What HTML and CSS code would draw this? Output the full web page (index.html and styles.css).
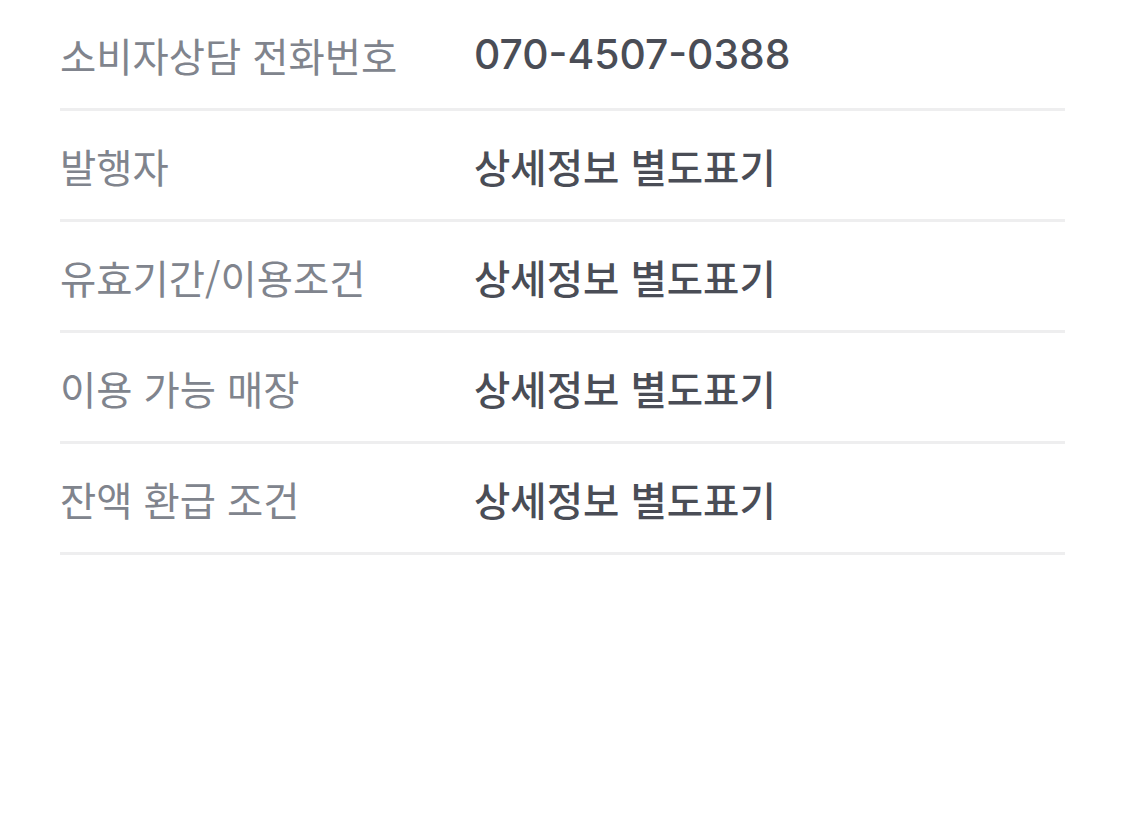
FILE: index.html
```html
<!DOCTYPE html>
<html lang="ko">
<head>
<meta charset="utf-8">
<link rel="stylesheet" href="styles.css">
</head>
<body>
<div class="info">
  <div class="row"><div class="label">소비자상담 전화번호</div><div class="value num">070-4507-0388</div></div>
  <div class="row"><div class="label">발행자</div><div class="value">상세정보 별도표기</div></div>
  <div class="row"><div class="label">유효기간/이용조건</div><div class="value">상세정보 별도표기</div></div>
  <div class="row"><div class="label">이용 가능 매장</div><div class="value">상세정보 별도표기</div></div>
  <div class="row"><div class="label">잔액 환급 조건</div><div class="value">상세정보 별도표기</div></div>
</div>
</body>
</html>
```
FILE: styles.css
```css
html, body {
  margin: 0;
  padding: 0;
  background: #ffffff;
}
body {
  font-family: "Noto Sans CJK KR", "Noto Sans", sans-serif;
}
.info {
  padding: 0 60px;
}
.row {
  display: flex;
  align-items: center;
  height: 108px;
  border-bottom: 3px solid #eeeeef;
}
.label {
  width: 414px;
  flex: none;
  font-size: 39.4px;
  color: #80848d;
  font-weight: 400;
}
.value {
  font-size: 39.5px;
  color: #4a4d56;
  font-weight: 500;
}
.value.num {
  font-family: Inter, "Noto Sans CJK KR", sans-serif;
  font-size: 40.8px;
  font-weight: 500;
}
```
